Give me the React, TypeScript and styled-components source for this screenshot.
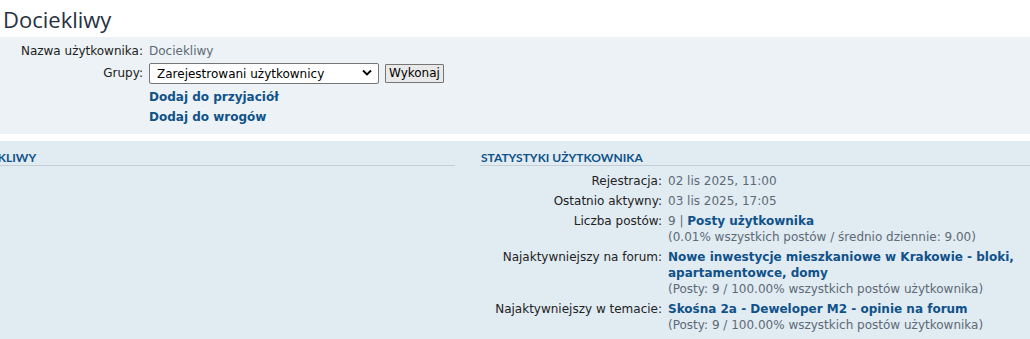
import React from "react";
import styled, { createGlobalStyle } from "styled-components";

const Global = createGlobalStyle`
  html, body { margin: 0; padding: 0; background: #ffffff; overflow: hidden; }
  body { font-family: "DejaVu Sans", Verdana, sans-serif; font-size: 12px; color: #333333; }
  * { box-sizing: border-box; }
`;

const Page = styled.div`
  width: 1030px;
  overflow: hidden;
`;

const Title = styled.h2`
  margin: 0;
  height: 37px;
  padding: 5px 0 0 3px;
  font-family: "Open Sans", "Liberation Sans", sans-serif;
  font-weight: 400;
  font-size: 22px;
  line-height: 28px;
  color: #28313f;
`;

const Panel = styled.div<{ $tone: "light" | "dark" }>`
  background: ${(p) => (p.$tone === "light" ? "#ecf2f5" : "#e1ebf2")};
`;

const TopPanel = styled(Panel)`
  padding: 6px 0 9px;
  margin-bottom: 7px;
`;

const Details = styled.dl<{ $labelWidth: number }>`
  margin: 0;
  display: grid;
  grid-template-columns: ${(p) => p.$labelWidth}px 1fr;
  column-gap: 6px;
  row-gap: 4px;
  align-items: start;
`;

const Label = styled.dt`
  margin: 0;
  text-align: right;
  line-height: 16px;
  color: #222222;
`;

const Value = styled.dd`
  margin: 0;
  line-height: 16px;
  color: #5d6a76;
`;

const FormRow = styled.dd`
  margin: 0 0 1px;
  display: flex;
  align-items: center;
  gap: 6px;
`;

const FormLabel = styled(Label)`
  padding-top: 2px;
`;

const SelectWrap = styled.div`
  position: relative;
  width: 230px;
  height: 21px;
`;

const Select = styled.select`
  appearance: none;
  width: 100%;
  height: 100%;
  border: 1px solid #767676;
  border-radius: 2px;
  background: #ffffff;
  padding: 0 24px 0 7px;
  font-family: "DejaVu Sans", Verdana, sans-serif;
  font-size: 12px;
  color: #000000;
`;

const Chevron = styled.svg`
  position: absolute;
  right: 7px;
  top: 6px;
  pointer-events: none;
`;

const Button = styled.button`
  height: 19px;
  padding: 0 3px;
  border: 1px solid #767676;
  border-radius: 1px;
  background: #e9e9e9;
  font-family: "DejaVu Sans", Verdana, sans-serif;
  font-size: 12px;
  color: #000000;
  line-height: 17px;
`;

const Link = styled.a`
  color: #105289;
  font-weight: bold;
  text-decoration: none;
  line-height: 16px;
`;

const LinkCell = styled.dd`
  margin: 0;
  line-height: 16px;
`;

const BottomPanel = styled(Panel)`
  padding-top: 9px;
  min-height: 198px;
  display: flex;
`;

const LeftColumn = styled.div`
  flex: 0 0 565px;
  margin-left: -110px;
`;

const RightColumn = styled.div`
  flex: 1;
  margin-left: 25px;
`;

const Heading = styled.h3`
  margin: 0;
  padding-left: 1px;
  height: 16px;
  border-bottom: 1px solid #c6cfd5;
  font-family: "Lato", "Liberation Sans", sans-serif;
  font-weight: 700;
  font-size: 12px;
  line-height: 16px;
  text-transform: uppercase;
  color: #105289;
`;

const Stats = styled(Details)`
  margin-top: 5px;
  padding-top: 2px;
`;

const Sub = styled.span`
  display: block;
  color: #5d6a76;
`;

export default function App() {
  return (
    <Page>
      <Global />
      <Title>Dociekliwy</Title>
      <TopPanel $tone="light">
        <Details $labelWidth={143}>
          <Label>Nazwa użytkownika:</Label>
          <Value>Dociekliwy</Value>
          <FormLabel>Grupy:</FormLabel>
          <FormRow>
            <SelectWrap>
              <Select defaultValue="reg">
                <option value="reg">Zarejestrowani użytkownicy</option>
              </Select>
              <Chevron width="10" height="8" viewBox="0 0 10 8">
                <path d="M1 1.5 L5 5.5 L9 1.5" fill="none" stroke="#000" strokeWidth="1.8" />
              </Chevron>
            </SelectWrap>
            <Button>Wykonaj</Button>
          </FormRow>
          <span />
          <LinkCell>
            <Link href="#">Dodaj do przyjaciół</Link>
          </LinkCell>
          <span />
          <LinkCell>
            <Link href="#">Dodaj do wrogów</Link>
          </LinkCell>
        </Details>
      </TopPanel>
      <BottomPanel $tone="dark">
        <LeftColumn>
          <Heading>Kontakt z Dociekliwy</Heading>
        </LeftColumn>
        <RightColumn>
          <Heading>Statystyki użytkownika</Heading>
          <Stats $labelWidth={182}>
            <Label>Rejestracja:</Label>
            <Value>02 lis 2025, 11:00</Value>
            <Label>Ostatnio aktywny:</Label>
            <Value>03 lis 2025, 17:05</Value>
            <Label>Liczba postów:</Label>
            <Value>
              9 | <Link href="#">Posty użytkownika</Link>
              <Sub>(0.01% wszystkich postów / średnio dziennie: 9.00)</Sub>
            </Value>
            <Label>Najaktywniejszy na forum:</Label>
            <Value>
              <Link href="#">Nowe inwestycje mieszkaniowe w Krakowie - bloki, apartamentowce, domy</Link>
              <Sub>(Posty: 9 / 100.00% wszystkich postów użytkownika)</Sub>
            </Value>
            <Label>Najaktywniejszy w temacie:</Label>
            <Value>
              <Link href="#">Skośna 2a - Deweloper M2 - opinie na forum</Link>
              <Sub>(Posty: 9 / 100.00% wszystkich postów użytkownika)</Sub>
            </Value>
          </Stats>
        </RightColumn>
      </BottomPanel>
    </Page>
  );
}
